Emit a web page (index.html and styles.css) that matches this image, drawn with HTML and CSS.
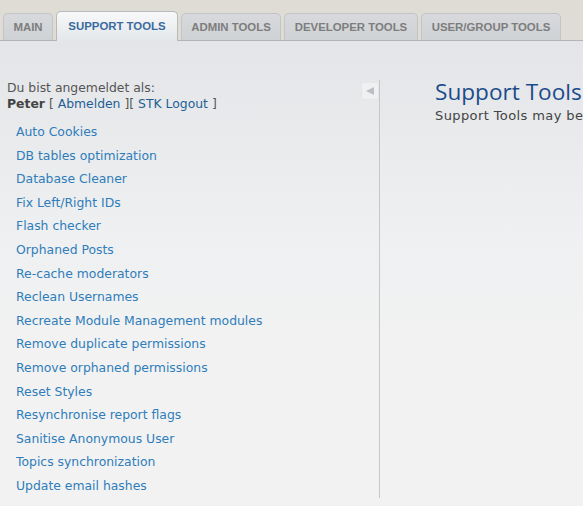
FILE: index.html
```html
<!DOCTYPE html>
<html>
<head>
<meta charset="utf-8">
<link rel="stylesheet" href="styles.css">
</head>
<body>
<div class="top">
  <nav class="tabs">
    <a class="tab">MAIN</a>
    <a class="tab active">SUPPORT TOOLS</a>
    <a class="tab">ADMIN TOOLS</a>
    <a class="tab">DEVELOPER TOOLS</a>
    <a class="tab">USER/GROUP TOOLS</a>
  </nav>
</div>
<div class="page">
  <aside class="side">
    <div class="login">
      <div>Du bist angemeldet als:</div>
      <div><b>Peter</b> [ <a>Abmelden</a> ][ <a>STK Logout</a> ]</div>
    </div>
    <ul class="menu">
      <li><a>Auto Cookies</a></li>
      <li><a>DB tables optimization</a></li>
      <li><a>Database Cleaner</a></li>
      <li><a>Fix Left/Right IDs</a></li>
      <li><a>Flash checker</a></li>
      <li><a>Orphaned Posts</a></li>
      <li><a>Re-cache moderators</a></li>
      <li><a>Reclean Usernames</a></li>
      <li><a>Recreate Module Management modules</a></li>
      <li><a>Remove duplicate permissions</a></li>
      <li><a>Remove orphaned permissions</a></li>
      <li><a>Reset Styles</a></li>
      <li><a>Resynchronise report flags</a></li>
      <li><a>Sanitise Anonymous User</a></li>
      <li><a>Topics synchronization</a></li>
      <li><a>Update email hashes</a></li>
    </ul>
    <span class="toggle"><svg width="12" height="12" viewBox="0 0 12 12"><polygon points="10,2 10,10 2,6" fill="#bcbec1"/></svg></span>
  </aside>
  <main class="main">
    <h1>Support Tools</h1>
    <p>Support Tools may be used to fix common problems.</p>
  </main>
</div>
</body>
</html>
```
FILE: styles.css
```css
html, body { margin: 0; padding: 0; }
body {
  width: 583px;
  height: 506px;
  overflow: hidden;
  font-family: "DejaVu Sans", Verdana, sans-serif;
  background: #f2f2f2;
}
.top {
  background: #dfdcd6;
  height: 40px;
  border-bottom: 1px solid #b4b4b4;
  box-sizing: content-box;
}
.tabs {
  display: flex;
  align-items: flex-end;
  height: 40px;
  padding-left: 3px;
  gap: 3px;
  white-space: nowrap;
}
.tab {
  display: block;
  flex-shrink: 0;
  height: 27px;
  line-height: 27px;
  text-align: center;
  font-family: "Liberation Sans", Arial, sans-serif;
  font-weight: bold;
  font-size: 11.4px;
  color: #7d7d7d;
  background: linear-gradient(#d7d9dc, #cfd2d5);
  border: 1px solid #c3c4c6;
  border-bottom: none;
  border-radius: 5px 5px 0 0;
  box-sizing: border-box;
}
.tab:nth-child(1) { width: 50px; }
.tab:nth-child(2) { width: 122px; }
.tab:nth-child(3) { width: 100px; }
.tab:nth-child(4) { width: 134px; }
.tab:nth-child(5) { width: 140px; }
.tab.active {
  height: 30px;
  line-height: 29px;
  margin-bottom: -1px;
  color: #3a6aa0;
  background: linear-gradient(#f7f8f9, #e4e7ea);
  border-color: #b8b9bb;
  position: relative;
  z-index: 1;
}
.page {
  display: flex;
  background: linear-gradient(#e3e5e8 0px, #eef0f1 200px, #f2f2f2 300px);
  height: 465px;
}
.side {
  position: relative;
  width: 380px;
  box-sizing: border-box;
  margin-top: 39px;
  height: 418px;
  border-right: 1px solid #c7c7c7;
  padding-left: 7px;
}
.login {
  font-size: 12.4px;
  line-height: 16px;
  color: #555;
}
.login b { color: #444; }
.login a { color: #1f5f94; }
.menu {
  list-style: none;
  margin: 8px 0 0;
  padding: 0 0 0 9px;
}
.menu li {
  font-size: 12.4px;
  line-height: 23.6px;
}
.menu a { color: #2f7dbb; }
.toggle {
  position: absolute;
  right: 0;
  top: 2px;
  width: 18px;
  height: 18px;
  background: #eff0f1;
  border: 1px solid #e4e6e8;
  box-sizing: border-box;
  display: flex;
  align-items: center;
  justify-content: center;
}
.main {
  flex: 1;
  padding: 37px 0 0 55px;
  white-space: nowrap;
  overflow: hidden;
}
.main h1 {
  margin: 0;
  font-family: "Open Sans", sans-serif;
  font-weight: normal;
  font-size: 22.6px;
  line-height: 28px;
  color: #1b4c8b;
}
.main p {
  margin: 2px 0 0;
  font-size: 13px;
  letter-spacing: 0.4px;
  color: #444;
}
```
